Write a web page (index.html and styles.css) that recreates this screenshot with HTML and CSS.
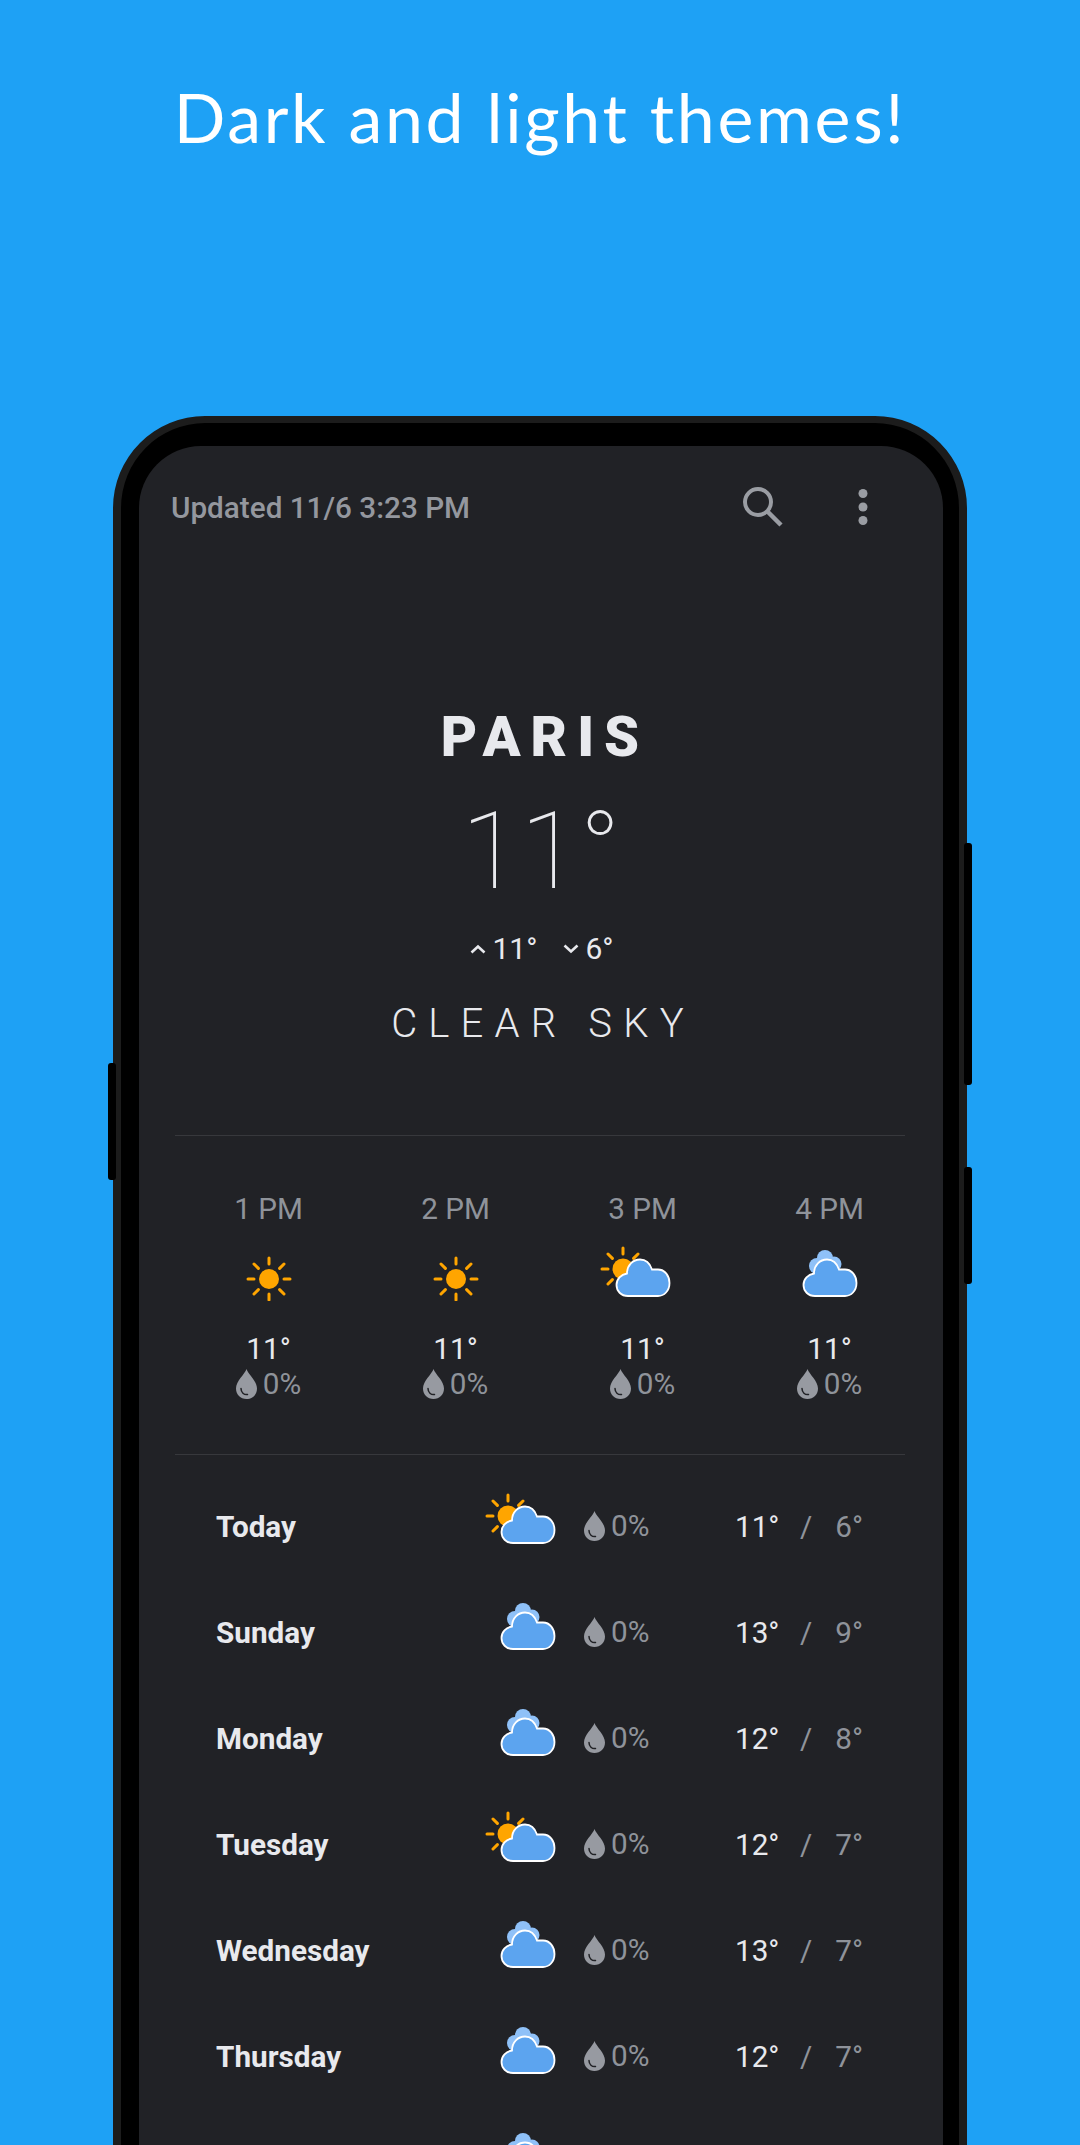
FILE: index.html
```html
<!DOCTYPE html>
<html lang="en">
<head>
<meta charset="UTF-8">
<meta name="viewport" content="width=device-width, initial-scale=1.0">
<title>Dark and light themes</title>
<link rel="stylesheet" href="styles.css">
</head>
<body>

<svg class="defs" width="0" height="0">
    <defs>
        <path id="cloud-shape" d="M28 51C21 51 16.500 46 16.500 40C16.500 34 21 29.500 27 28.500C27 20 33 14.500 40 14.500C46 14.500 50 18.500 52 24.500C54 24.500 56 24.500 58 24.500C65 24.500 69.500 31 69.500 38C69.500 46 64 51 58 51Z"/>
        <g id="rays" stroke="#ffa500" stroke-width="3" stroke-linecap="round">
            <path d="M0 -15V-21M0 15V21M-15 0H-21M15 0H21M-10.6 -10.6L-15 -15M10.6 -10.6L15 -15M-10.6 10.6L-15 15M10.6 10.6L15 15"/>
        </g>
        <symbol id="icon-sun" viewBox="0 0 86 56">
            <g transform="translate(43 34)">
                <use href="#rays"/>
                <circle r="10" fill="#ffa500"/>
            </g>
        </symbol>
        <symbol id="icon-partly" viewBox="0 0 86 56">
            <g transform="translate(23 24)">
                <use href="#rays"/>
                <circle r="10.5" fill="#ffa500"/>
            </g>
            <use href="#cloud-shape" fill="#5ca4ef" stroke="#fff" stroke-width="1.8"/>
        </symbol>
        <symbol id="icon-cloudy" viewBox="0 0 86 56">
            <g fill="#8fc1f8">
                <circle cx="38" cy="13" r="8"/>
                <circle cx="30" cy="21" r="8"/>
                <circle cx="47" cy="19" r="7.500"/>
            </g>
            <use href="#cloud-shape" fill="#5ca4ef" stroke="#fff" stroke-width="1.8"/>
        </symbol>
        <symbol id="icon-drop" viewBox="0 0 21 30">
            <path d="M10.5 0C12 5 21 12 21 19.500C21 25.500 16.500 30 10.500 30C4.500 30 0 25.500 0 19.500C0 12 9 5 10.500 0Z" fill="#979aa1"/>
            <path d="M5 19.500C5 23.500 8 26 11.500 25.500" fill="none" stroke="#212226" stroke-width="1.500" stroke-linecap="round"/>
        </symbol>
    </defs>
</svg>

<h1 class="headline">Dark and light themes!</h1>

<div class="phone">
    <span class="side-btn left-btn"></span>
    <span class="side-btn right-btn-1"></span>
    <span class="side-btn right-btn-2"></span>

    <div class="screen">
        <div class="topbar">
            <span class="updated">Updated 11/6 3:23 PM</span>
            <svg class="search-icon" width="44" height="44" viewBox="0 0 44 44">
                <circle cx="17" cy="16" r="13" fill="none" stroke="#9a9da3" stroke-width="4"/>
                <path d="M26.500 25.500L40 39" stroke="#9a9da3" stroke-width="4.500"/>
            </svg>
            <svg class="more-icon" width="12" height="40" viewBox="0 0 12 40">
                <circle cx="6" cy="6.500" r="4.500" fill="#9a9da3"/>
                <circle cx="6" cy="20" r="4.500" fill="#9a9da3"/>
                <circle cx="6" cy="33.500" r="4.500" fill="#9a9da3"/>
            </svg>
        </div>

        <div class="current">
            <div class="city">PARIS</div>
            <div class="temp-now">11°</div>
            <div class="hi-lo">
                <span class="hi-lo-item">
                    <svg width="16" height="10" viewBox="0 0 16 10"><path d="M1.500 8.500L8 2.500L14.500 8.500" fill="none" stroke="#e8e9ed" stroke-width="2.600"/></svg>
                    11°
                </span>
                <span class="hi-lo-item">
                    <svg width="16" height="10" viewBox="0 0 16 10"><path d="M1.500 1.500L8 7.500L14.500 1.500" fill="none" stroke="#e8e9ed" stroke-width="2.600"/></svg>
                    6°
                </span>
            </div>
            <div class="condition">CLEAR SKY</div>
        </div>

        <div class="divider"></div>

        <div class="hours">
            <div class="hour">
                <div class="hour-time">1 PM</div>
                <svg class="wx-icon"><use href="#icon-sun"/></svg>
                <div class="hour-temp">11°</div>
                <div class="pop"><svg class="drop"><use href="#icon-drop"/></svg>0%</div>
            </div>
            <div class="hour">
                <div class="hour-time">2 PM</div>
                <svg class="wx-icon"><use href="#icon-sun"/></svg>
                <div class="hour-temp">11°</div>
                <div class="pop"><svg class="drop"><use href="#icon-drop"/></svg>0%</div>
            </div>
            <div class="hour">
                <div class="hour-time">3 PM</div>
                <svg class="wx-icon"><use href="#icon-partly"/></svg>
                <div class="hour-temp">11°</div>
                <div class="pop"><svg class="drop"><use href="#icon-drop"/></svg>0%</div>
            </div>
            <div class="hour">
                <div class="hour-time">4 PM</div>
                <svg class="wx-icon"><use href="#icon-cloudy"/></svg>
                <div class="hour-temp">11°</div>
                <div class="pop"><svg class="drop"><use href="#icon-drop"/></svg>0%</div>
            </div>
        </div>

        <div class="divider"></div>

        <div class="days">
            <div class="day">
                <span class="day-name">Today</span>
                <svg class="wx-icon"><use href="#icon-partly"/></svg>
                <div class="pop"><svg class="drop"><use href="#icon-drop"/></svg>0%</div>
                <span class="high">11°</span><span class="slash">/</span><span class="low">6°</span>
            </div>
            <div class="day">
                <span class="day-name">Sunday</span>
                <svg class="wx-icon"><use href="#icon-cloudy"/></svg>
                <div class="pop"><svg class="drop"><use href="#icon-drop"/></svg>0%</div>
                <span class="high">13°</span><span class="slash">/</span><span class="low">9°</span>
            </div>
            <div class="day">
                <span class="day-name">Monday</span>
                <svg class="wx-icon"><use href="#icon-cloudy"/></svg>
                <div class="pop"><svg class="drop"><use href="#icon-drop"/></svg>0%</div>
                <span class="high">12°</span><span class="slash">/</span><span class="low">8°</span>
            </div>
            <div class="day">
                <span class="day-name">Tuesday</span>
                <svg class="wx-icon"><use href="#icon-partly"/></svg>
                <div class="pop"><svg class="drop"><use href="#icon-drop"/></svg>0%</div>
                <span class="high">12°</span><span class="slash">/</span><span class="low">7°</span>
            </div>
            <div class="day">
                <span class="day-name">Wednesday</span>
                <svg class="wx-icon"><use href="#icon-cloudy"/></svg>
                <div class="pop"><svg class="drop"><use href="#icon-drop"/></svg>0%</div>
                <span class="high">13°</span><span class="slash">/</span><span class="low">7°</span>
            </div>
            <div class="day">
                <span class="day-name">Thursday</span>
                <svg class="wx-icon"><use href="#icon-cloudy"/></svg>
                <div class="pop"><svg class="drop"><use href="#icon-drop"/></svg>0%</div>
                <span class="high">12°</span><span class="slash">/</span><span class="low">7°</span>
            </div>
            <div class="day">
                <span class="day-name"></span>
                <svg class="wx-icon"><use href="#icon-cloudy"/></svg>
            </div>
        </div>
    </div>
</div>

</body>
</html>
```

FILE: styles.css
```css
body {
    margin: 0;
    height: 2145px;
    overflow: hidden;
    background-color: #1ea1f5;
    font-family: Roboto, "Liberation Sans", sans-serif;
}
.defs {
    position: absolute;
}
.headline {
    margin: 0;
    height: 416px;
    padding-top: 72px;
    box-sizing: border-box;
    text-align: center;
    color: #fff;
    font-family: "Lato", sans-serif;
    font-size: 68px;
    line-height: 90px;
    font-weight: 400;
    letter-spacing: 2.700px;
}
.phone {
    position: relative;
    box-sizing: border-box;
    width: 854px;
    height: 1900px;
    margin-left: 113px;
    padding: 23px 16px 30px 18px;
    background-color: #000;
    border: 8px solid #1c1c1c;
    border-top-width: 7px;
    border-radius: 92px;
}
.side-btn {
    position: absolute;
    width: 8px;
    background-color: #000;
    border-radius: 3px;
}
.left-btn {
    left: -13px;
    top: 640px;
    height: 117px;
}
.right-btn-1 {
    right: -13px;
    top: 420px;
    height: 242px;
}
.right-btn-2 {
    right: -13px;
    top: 744px;
    height: 117px;
}
.screen {
    height: 100%;
    background-color: #212226;
    border-radius: 62px;
    overflow: hidden;
}
.topbar {
    display: flex;
    align-items: center;
    height: 122px;
    padding-left: 32px;
}
.updated {
    flex: 1;
    font-size: 29.700px;
    font-weight: 500;
    color: #94979e;
}
.search-icon {
    margin-right: 72px;
    margin-top: 1px;
}
.more-icon {
    margin-right: 74px;
}
.current {
    display: flex;
    flex-direction: column;
    align-items: center;
    padding-top: 138px;
}
.city {
    height: 62px;
    line-height: 62px;
    font-size: 56px;
    font-weight: 900;
    letter-spacing: 10px;
    margin-right: -8px;
    color: #e8e9ed;
}
.temp-now {
    height: 120px;
    margin-top: 23px;
    line-height: 120px;
    font-size: 108px;
    font-weight: 100;
    color: #e8e9ed;
}
.hi-lo {
    display: flex;
    gap: 26px;
    margin-top: 20px;
    margin-left: 2px;
    height: 36px;
    line-height: 36px;
    font-size: 30px;
    color: #e8e9ed;
}
.hi-lo-item {
    display: flex;
    align-items: center;
    gap: 6px;
}
.condition {
    height: 46px;
    margin-top: 34px;
    line-height: 46px;
    font-size: 40px;
    font-weight: 300;
    letter-spacing: 11.200px;
    margin-right: -4px;
    color: #e8e9ed;
}
.divider {
    height: 1px;
    margin: 0 38px 0 36px;
    background-color: #37383c;
}
.current + .divider {
    margin-top: 88px;
}
.hours {
    display: grid;
    grid-template-columns: repeat(4, 187px);
    padding: 55px 0 52px 36px;
}
.hour {
    display: flex;
    flex-direction: column;
    align-items: center;
}
.hour-time {
    height: 36px;
    line-height: 36px;
    font-size: 29.700px;
    color: #8f939a;
}
.wx-icon {
    flex: none;
    width: 86px;
    height: 56px;
}
.hour .wx-icon {
    margin-top: 18px;
}
.hour-temp {
    height: 34px;
    margin-top: 31px;
    line-height: 34px;
    font-size: 29.700px;
    color: #e8e9ed;
}
.pop {
    display: flex;
    align-items: center;
    gap: 6px;
    height: 36px;
    line-height: 36px;
    font-size: 29.700px;
    color: #8f939a;
}
.drop {
    width: 21px;
    height: 30px;
}
.days {
    padding-top: 18px;
}
.day {
    display: grid;
    grid-template-columns: 269px 86px 13px 151px 43px 57px 28px;
    align-items: center;
    height: 106px;
    padding-left: 77px;
    font-size: 29.700px;
}
.day-name {
    font-weight: 700;
    color: #e8e9ed;
}
.day .wx-icon {
    margin-top: -12px;
}
.day .pop {
    grid-column: 4;
}
.high {
    color: #e8e9ed;
}
.slash {
    padding-left: 22px;
    color: #8f939a;
}
.low {
    text-align: right;
    color: #8f939a;
}
```
